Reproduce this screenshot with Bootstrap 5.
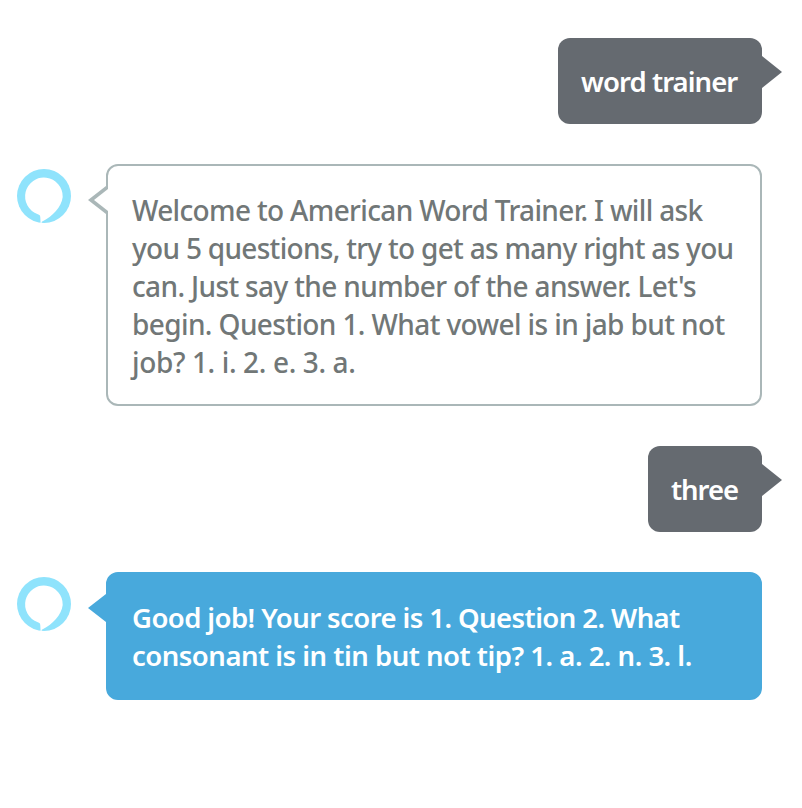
<!DOCTYPE html>
<html lang="en">
<head>
<meta charset="utf-8">
<meta name="viewport" content="width=device-width, initial-scale=1">
<title>American Word Trainer</title>
<link rel="stylesheet" href="https://cdn.jsdelivr.net/npm/bootstrap@5.3.0/dist/css/bootstrap.min.css">
<style>
body { font-family: "Noto Sans", sans-serif; font-size: 28px; line-height: 38px; font-weight: 500; }
.chat { padding: 38px 40px 0 16px; gap: 40px; }
.bubble { border-radius: 12px; padding: 25px 24px 23px; }
.bubble-user { background: #656a70; color: #fff; padding-left: 23px; padding-right: 25px; }
.bubble-user, .bubble-correct { font-size: 27.5px; font-weight: 600; }
.bubble-reply { width: 656px; border: 2px solid #aab7b8; color: #717777; }
.bubble-correct { background: #48a9dc; border-color: #48a9dc; color: #fff; }
.tail { position: absolute; display: block; }
.tail-right { left: 100%; top: 18px; margin-left: -1px; }
.tail-left { left: -20px; top: 18px; }
.avatar { margin-top: 4px; width: 56px; height: 56px; }
.line { display: block; white-space: nowrap; }
.w-trainer { width: 156px; letter-spacing: -.93px; }
.w-three { width: 66px; letter-spacing: -1.05px; }
.l1 { letter-spacing: -.65px; }
.l2 { letter-spacing: -.7px; }
.l3 { letter-spacing: -.64px; }
.l4 { letter-spacing: -.61px; }
.l5 { letter-spacing: -.37px; }
.l6 { letter-spacing: -.58px; }
.l7 { letter-spacing: -.5px; }
</style>
</head>
<body class="bg-white">
<main class="chat d-flex flex-column">
  <div class="d-flex justify-content-end">
    <div class="bubble bubble-user position-relative">
      <span class="line w-trainer">word trainer</span>
      <svg class="tail tail-right" width="21" height="32" viewBox="0 0 21 32"><path d="M0 0H1L21 16L1 32H0Z" fill="#656a70"/></svg>
    </div>
  </div>
  <div class="d-flex justify-content-between align-items-start">
    <svg class="avatar" viewBox="0 0 56 56"><circle cx="28" cy="28" r="27" fill="#8fe3fc"/><path fill="#fff" d="M24.6 55.5L24.3 49.5C24.3 47.5 23.6 46.8 21.8 46.2A18.8 18.8 0 1 1 46.7 29C45.5 39 37 48 25.8 53.8L25.4 55.5Z"/></svg>
    <div class="bubble bubble-reply position-relative">
      <span class="line l1">Welcome to American Word Trainer. I will ask</span>
      <span class="line l2">you 5 questions, try to get as many right as you</span>
      <span class="line l3">can. Just say the number of the answer. Let's</span>
      <span class="line l4">begin. Question 1. What vowel is in jab but not</span>
      <span class="line l5">job? 1. i. 2. e. 3. a.</span>
      <svg class="tail tail-left" width="20" height="32" viewBox="0 0 20 32"><path d="M18 2L0 16L18 30H20V2Z" fill="#aab7b8"/><path d="M20 5L6 16L20 27Z" fill="#fff"/></svg>
    </div>
  </div>
  <div class="d-flex justify-content-end">
    <div class="bubble bubble-user position-relative">
      <span class="line w-three">three</span>
      <svg class="tail tail-right" width="21" height="32" viewBox="0 0 21 32"><path d="M0 0H1L21 16L1 32H0Z" fill="#656a70"/></svg>
    </div>
  </div>
  <div class="d-flex justify-content-between align-items-start">
    <svg class="avatar" viewBox="0 0 56 56"><circle cx="28" cy="28" r="27" fill="#8fe3fc"/><path fill="#fff" d="M24.6 55.5L24.3 49.5C24.3 47.5 23.6 46.8 21.8 46.2A18.8 18.8 0 1 1 46.7 29C45.5 39 37 48 25.8 53.8L25.4 55.5Z"/></svg>
    <div class="bubble bubble-reply bubble-correct position-relative">
      <span class="line l6">Good job! Your score is 1. Question 2. What</span>
      <span class="line l7">consonant is in tin but not tip? 1. a. 2. n. 3. l.</span>
      <svg class="tail tail-left" width="20" height="32" viewBox="0 0 20 32"><path d="M18 2L0 16L18 30H20V2Z" fill="#48a9dc"/></svg>
    </div>
  </div>
</main>
<script src="https://cdn.jsdelivr.net/npm/bootstrap@5.3.0/dist/js/bootstrap.bundle.min.js"></script>
</body>
</html>
